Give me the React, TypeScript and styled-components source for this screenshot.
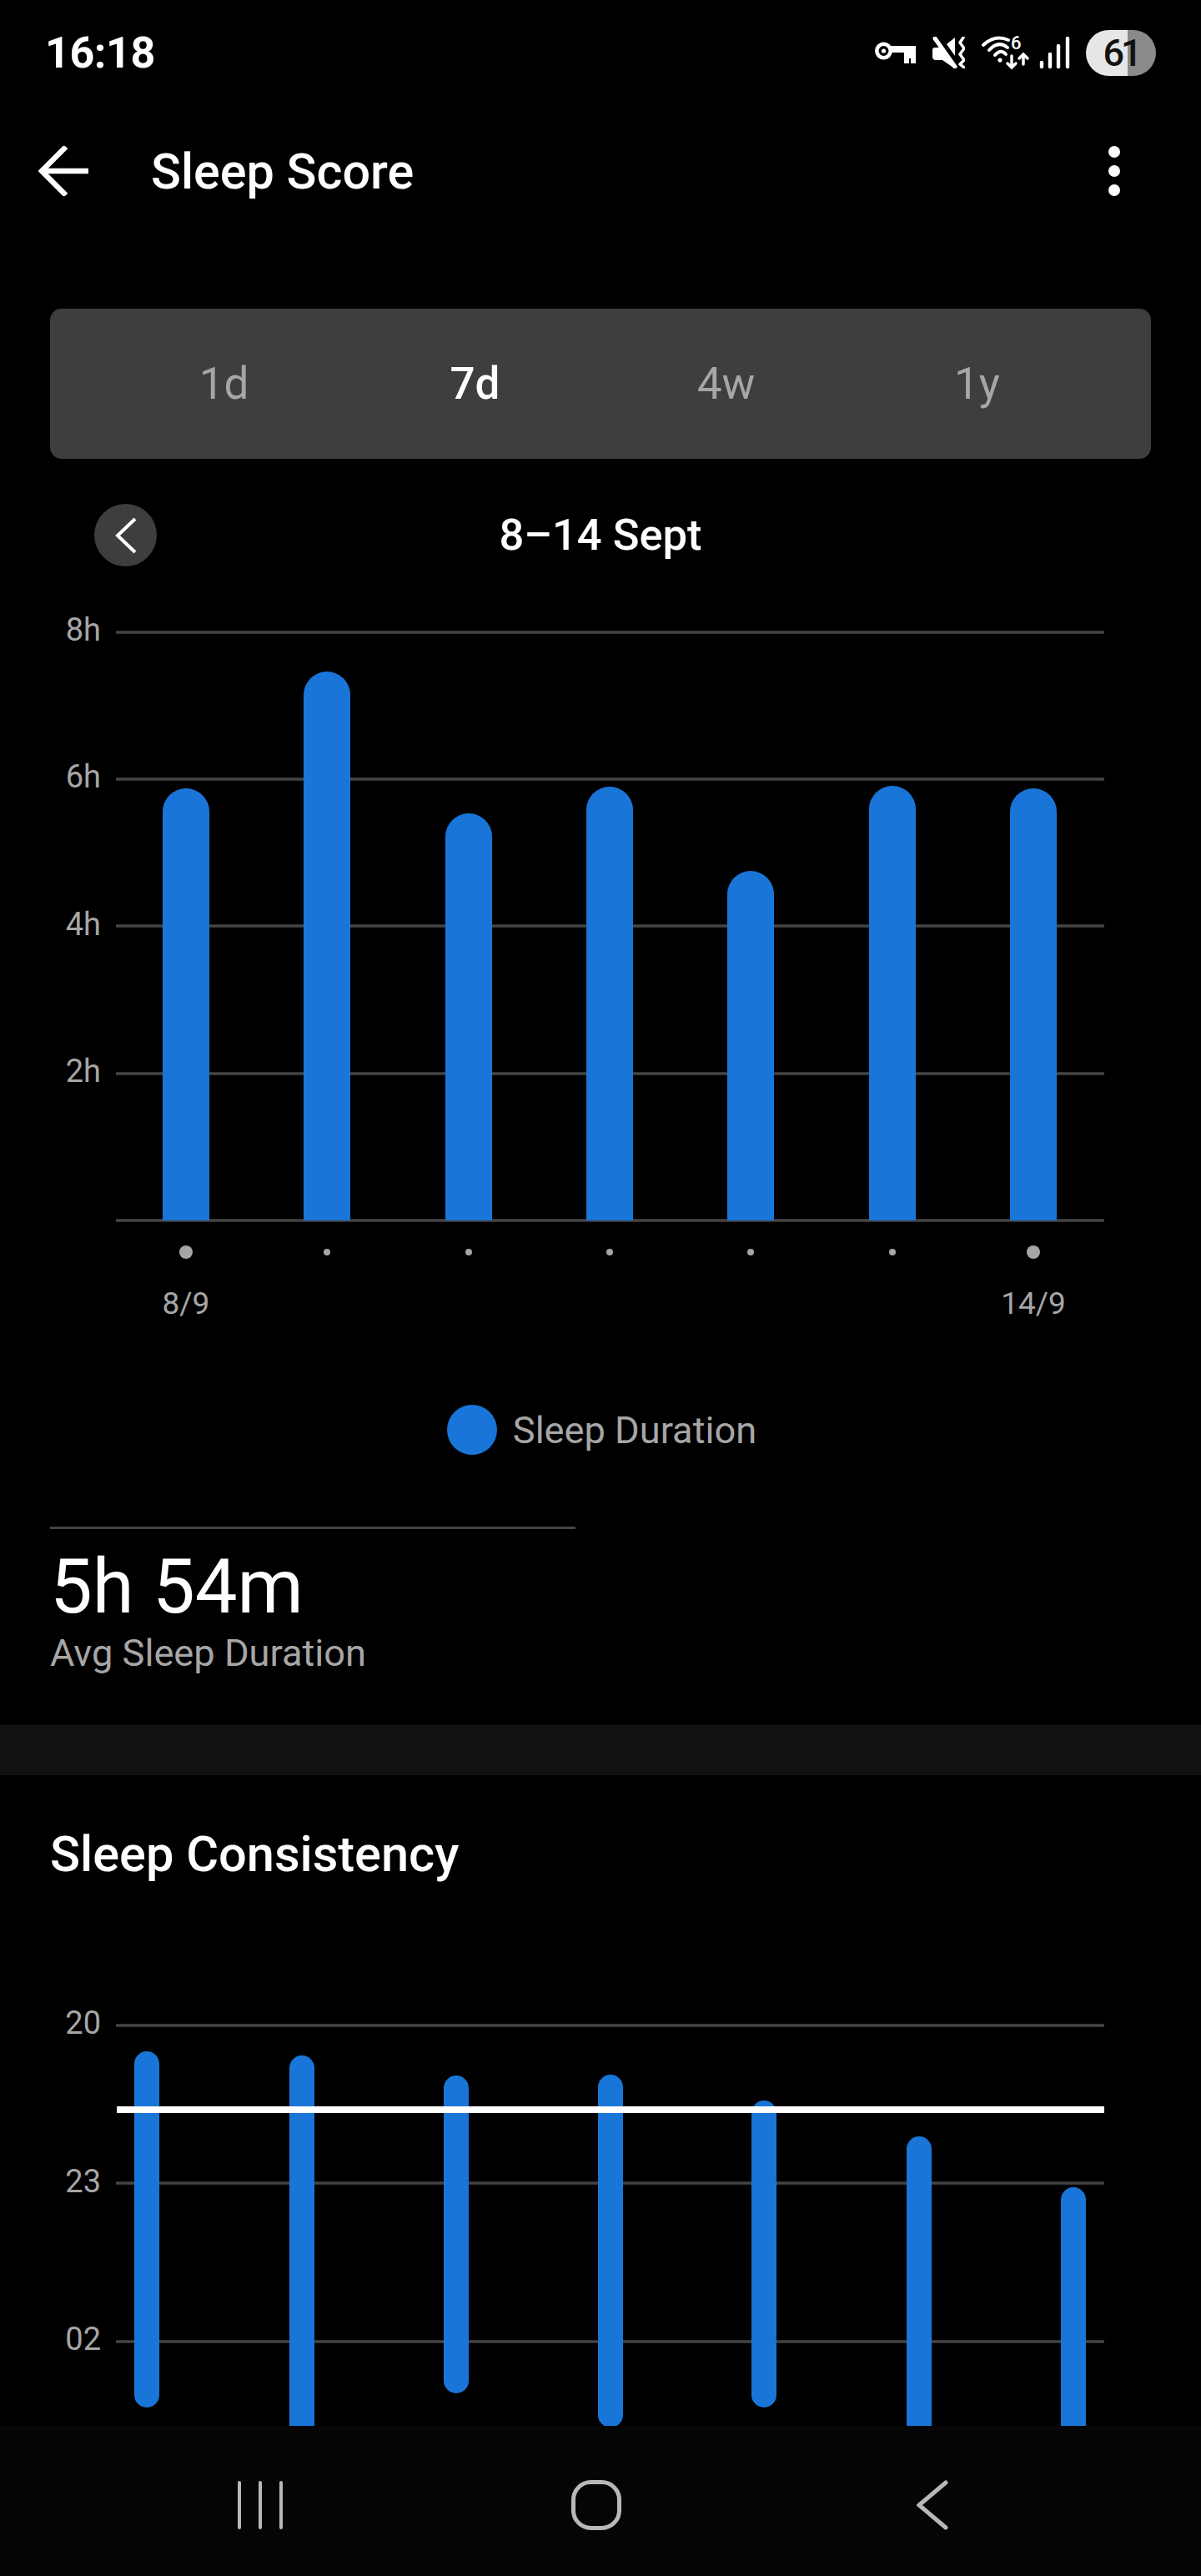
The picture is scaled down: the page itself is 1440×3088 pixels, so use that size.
import React from "react";
import styled, { createGlobalStyle } from "styled-components";

const GlobalStyle = createGlobalStyle`
  html, body {
    margin: 0;
    padding: 0;
    background: #000;
  }
  * {
    box-sizing: border-box;
  }
`;

const BLUE = "#1976d8";
const GRID = "#444444";
const MUTED = "#a6a6a6";

const Screen = styled.div`
  display: flex;
  flex-direction: column;
  width: 1440px;
  height: 3088px;
  overflow: hidden;
  background: #000;
  color: #fff;
  font-family: Roboto, "Liberation Sans", sans-serif;
`;

const StatusBar = styled.div`
  display: flex;
  flex: none;
  align-items: center;
  justify-content: space-between;
  height: 126px;
  padding: 0 54px;
`;

const Clock = styled.span`
  font-size: 52px;
  font-weight: 700;
  letter-spacing: -0.4px;
`;

const Tray = styled.div`
  display: flex;
  align-items: center;
  gap: 20px;
`;

const SignalIcon = styled.svg`
  margin-left: -9px;
`;

const Battery = styled.div`
  display: flex;
  align-items: center;
  justify-content: center;
  width: 84px;
  height: 55px;
  margin-left: -1px;
  border-radius: 28px;
  background: linear-gradient(90deg, #e6e6e6 0 50px, #8a8a8a 50px);
  color: #111;
  font-size: 45px;
  font-weight: 500;
  letter-spacing: -4px;
`;

const Header = styled.div`
  display: flex;
  flex: none;
  align-items: center;
  height: 158px;
  padding: 0 97px 0 46px;
`;

const Title = styled.h1`
  flex: 1;
  margin: 0 0 0 75px;
  font-size: 59.3px;
  font-weight: 500;
`;

const Kebab = styled.div`
  display: flex;
  flex-direction: column;
  gap: 9px;
`;

const KebabDot = styled.span`
  width: 14px;
  height: 14px;
  border-radius: 50%;
  background: #fff;
`;

const Body = styled.div`
  flex: 1;
  min-height: 0;
  overflow: hidden;
`;

const RangeTabs = styled.div`
  display: grid;
  grid-template-columns: repeat(4, 301px);
  align-items: center;
  height: 180px;
  margin: 86px 60px 0;
  padding: 0 58px;
  border-radius: 14px;
  background: #3e3e3e;
`;

const RangeTab = styled.span<{ $active?: boolean }>`
  color: ${(p) => (p.$active ? "#fff" : MUTED)};
  font-size: 53px;
  font-weight: ${(p) => (p.$active ? 500 : 400)};
  text-align: center;
`;

const DateRow = styled.div`
  display: flex;
  align-items: center;
  height: 75px;
  margin: 54px 0 0;
  padding: 0 113px;
`;

const PrevButton = styled.div`
  display: flex;
  flex: none;
  align-items: center;
  justify-content: center;
  width: 75px;
  height: 75px;
  border-radius: 50%;
  background: #3e3e3e;
`;

const DateLabel = styled.span`
  flex: 1;
  margin: 0 75px 2px 0;
  font-size: 52.5px;
  font-weight: 500;
  text-align: center;
`;

const ChartRow = styled.div<{ $top: number }>`
  display: flex;
  margin-top: ${(p) => p.$top}px;
`;

const Axis = styled.div`
  flex: none;
  width: 121px;
  padding-top: 1px;
`;

const AxisLabel = styled.div<{ $step: number }>`
  height: ${(p) => p.$step}px;
  color: ${MUTED};
  font-size: 38px;
  line-height: 48px;
  text-align: right;
`;

const Plot = styled.svg`
  display: block;
  flex: none;
`;

const DayLabels = styled.div`
  display: flex;
  justify-content: space-between;
  margin-top: 21px;
  padding: 0 151px 0 173px;
`;

const DayLabel = styled.span`
  width: 100px;
  color: ${MUTED};
  font-size: 37px;
  line-height: 44px;
  text-align: center;
`;

const Legend = styled.div`
  display: flex;
  align-items: center;
  justify-content: center;
  gap: 19px;
  height: 60px;
  margin-top: 99px;
  padding-left: 3px;
`;

const LegendDot = styled.span`
  width: 60px;
  height: 60px;
  border-radius: 50%;
  background: ${BLUE};
`;

const LegendText = styled.span`
  color: ${MUTED};
  font-size: 45.2px;
`;

const Divider = styled.div`
  width: 630px;
  height: 3px;
  margin: 86px 0 0 60px;
  background: ${GRID};
`;

const AvgValue = styled.div`
  margin: 19px 0 0 60px;
  font-size: 90.4px;
  line-height: 100px;
`;

const AvgLabel = styled.div`
  margin: 0 0 0 60px;
  color: ${MUTED};
  font-size: 45.2px;
  line-height: 60px;
`;

const Band = styled.div`
  height: 60px;
  margin-top: 56px;
  background: #111111;
`;

const SectionTitle = styled.h2`
  margin: 60px 0 0 60px;
  font-size: 59.5px;
  font-weight: 500;
  line-height: 70px;
`;

const NavBar = styled.div`
  display: grid;
  flex: none;
  grid-template-columns: repeat(3, 403px);
  align-items: center;
  justify-items: center;
  height: 180px;
  padding: 10px 121px 0 110px;
  background: #050505;
`;

const duration = [
  { x: 223, top: 945 },
  { x: 392, top: 805 },
  { x: 562, top: 975 },
  { x: 731, top: 943 },
  { x: 900, top: 1044 },
  { x: 1070, top: 942 },
  { x: 1239, top: 945 },
];

const consistency = [
  { x: 176, top: 2459, bottom: 2886 },
  { x: 362, top: 2464, bottom: 2960 },
  { x: 547, top: 2488, bottom: 2869 },
  { x: 732, top: 2487, bottom: 2910 },
  { x: 916, top: 2518, bottom: 2886 },
  { x: 1102, top: 2561, bottom: 2960 },
  { x: 1287, top: 2622, bottom: 2960 },
];

const gridLine = (y: number) => (
  <line key={y} x1={139} x2={1324} y1={y} y2={y} stroke={GRID} strokeWidth={3.5} />
);

const BackArrow = () => (
  <svg width="60" height="60" viewBox="0 0 60 60" fill="none" stroke="#fff" strokeWidth="6.5">
    <path d="M33 1 L4 30 L33 59 M4 30 H60" />
  </svg>
);

const KeyIcon = () => (
  <svg width="49" height="26" viewBox="0 0 49 26" fill="#fff">
    <circle cx="10.5" cy="11" r="8.2" fill="none" stroke="#fff" strokeWidth="4.5" />
    <circle cx="10.5" cy="11" r="2.6" />
    <path d="M18 5 H49 V26 H43 V20 H41 V26 H35 V13 H18 Z" />
  </svg>
);

const MuteIcon = () => (
  <svg width="39" height="38" viewBox="0 0 39 38">
    <path d="M0 16 Q0 13 3 13 H11 L28 36 L25 37 L12 28 H4 Q0 28 0 24 Z" fill="#fff" />
    <path d="M17 9 L27 1 V23 Z" fill="#fff" />
    <path d="M3 2 L27 36" stroke="#fff" strokeWidth="5" strokeLinecap="round" />
    <path
      d="M37 1 L33 7 L38 14 L33 21 L38 28 L33 33 L38 37"
      fill="none"
      stroke="#fff"
      strokeWidth="3.5"
      strokeLinecap="round"
      strokeLinejoin="round"
    />
  </svg>
);

const WifiIcon = () => (
  <svg width="58" height="58" viewBox="0 -8 58 58" fill="none" stroke="#fff" strokeWidth="4" strokeLinecap="round">
    <path d="M2 12 Q16 -1 32 6" />
    <path d="M9 18 Q20 6 31 15" />
    <path d="M16 24 Q23 16 29 23" />
    <circle cx="22" cy="30" r="2.6" fill="#fff" stroke="none" />
    <text x="35" y="17" fill="#fff" stroke="none" fontSize="22" fontWeight="500" fontFamily="Roboto, sans-serif">
      6
    </text>
    <path d="M36 25 V39 M31 34 L36 39 L41 34" strokeWidth="3.5" />
    <path d="M50 35 V23 M45 28 L50 23 L55 28" strokeWidth="3.5" />
  </svg>
);

const SignalBars = () => (
  <SignalIcon width="37" height="39" viewBox="0 0 37 39" fill="none" stroke="#fff" strokeWidth="4.4" strokeLinecap="round">
    <path d="M3 36 V31 M13 36 V21 M23 36 V11 M34 36 V2" />
  </SignalIcon>
);

const NavRecents = () => (
  <svg width="54" height="58" viewBox="0 0 54 58" fill="none" stroke="#b8b8b8" strokeWidth="4" strokeLinecap="round">
    <path d="M2 2 V56 M27 2 V56 M52 2 V56" />
  </svg>
);

const NavHome = () => (
  <svg width="60" height="60" viewBox="0 0 60 60" fill="none" stroke="#b8b8b8" strokeWidth="5">
    <rect x="2.5" y="2.5" width="55" height="55" rx="21" />
  </svg>
);

const NavBack = () => (
  <svg width="38" height="60" viewBox="0 0 38 60" fill="none" stroke="#b8b8b8" strokeWidth="5" strokeLinecap="round">
    <path d="M35 3 L3 30 L35 57" />
  </svg>
);

export default function App() {
  return (
    <>
      <GlobalStyle />
      <Screen>
        <StatusBar>
          <Clock>16:18</Clock>
          <Tray>
            <KeyIcon />
            <MuteIcon />
            <WifiIcon />
            <SignalBars />
            <Battery>61</Battery>
          </Tray>
        </StatusBar>

        <Header>
          <BackArrow />
          <Title>Sleep Score</Title>
          <Kebab>
            <KebabDot />
            <KebabDot />
            <KebabDot />
          </Kebab>
        </Header>

        <Body>
          <RangeTabs>
            <RangeTab>1d</RangeTab>
            <RangeTab $active>7d</RangeTab>
            <RangeTab>4w</RangeTab>
            <RangeTab>1y</RangeTab>
          </RangeTabs>

          <DateRow>
            <PrevButton>
              <svg width="26" height="44" viewBox="0 0 26 44" fill="none" stroke="#fff" strokeWidth="4">
                <path d="M24 2 L3 22 L24 42" />
              </svg>
            </PrevButton>
            <DateLabel>8–14 Sept</DateLabel>
          </DateRow>

          <ChartRow $top={51}>
            <Axis>
              {["8h", "6h", "4h", "2h"].map((label) => (
                <AxisLabel key={label} $step={176.25}>
                  {label}
                </AxisLabel>
              ))}
            </Axis>
            <Plot width="1319" height="790" viewBox="121 730 1319 790">
              {[758, 934, 1110, 1287, 1463].map(gridLine)}
              {duration.map((bar) => (
                <path
                  key={bar.x}
                  fill={BLUE}
                  d={`M${bar.x - 28} 1463 V${bar.top + 28} A28 28 0 0 1 ${bar.x + 28} ${bar.top + 28} V1463 Z`}
                />
              ))}
              {duration.map((bar, i) => (
                <circle
                  key={bar.x}
                  cx={bar.x}
                  cy={1501}
                  r={i === 0 || i === duration.length - 1 ? 8 : 4}
                  fill={MUTED}
                />
              ))}
            </Plot>
          </ChartRow>

          <DayLabels>
            <DayLabel>8/9</DayLabel>
            <DayLabel>14/9</DayLabel>
          </DayLabels>

          <Legend>
            <LegendDot />
            <LegendText>Sleep Duration</LegendText>
          </Legend>

          <Divider />
          <AvgValue>5h 54m</AvgValue>
          <AvgLabel>Avg Sleep Duration</AvgLabel>

          <Band />

          <SectionTitle>Sleep Consistency</SectionTitle>

          <ChartRow $top={142}>
            <Axis>
              {["20", "23", "02"].map((label) => (
                <AxisLabel key={label} $step={189.5}>
                  {label}
                </AxisLabel>
              ))}
            </Axis>
            <Plot width="1319" height="600" viewBox="121 2400 1319 600">
              {[2428, 2617, 2807].map(gridLine)}
              {consistency.map((bar) => (
                <rect
                  key={bar.x}
                  x={bar.x - 15}
                  y={bar.top}
                  width={30}
                  height={bar.bottom - bar.top}
                  rx={15}
                  fill={BLUE}
                />
              ))}
              <rect x={140} y={2525} width={1184} height={8} fill="#fff" />
            </Plot>
          </ChartRow>
        </Body>

        <NavBar>
          <NavRecents />
          <NavHome />
          <NavBack />
        </NavBar>
      </Screen>
    </>
  );
}
